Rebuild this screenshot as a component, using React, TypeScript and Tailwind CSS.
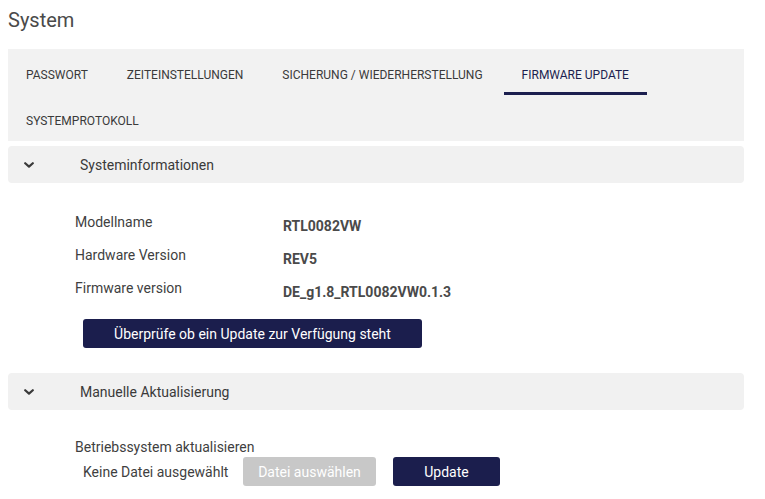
import React from "react";

const tabs = [
  { label: "PASSWORT", active: false },
  { label: "ZEITEINSTELLUNGEN", active: false },
  { label: "SICHERUNG / WIEDERHERSTELLUNG", active: false },
  { label: "FIRMWARE UPDATE", active: true },
  { label: "SYSTEMPROTOKOLL", active: false },
];

function Chevron() {
  return (
    <svg width="10" height="6" viewBox="0 0 10 6" className="block">
      <polyline points="1.2,1.2 5,4.6 8.8,1.2" fill="none" stroke="#3a3a3a" strokeWidth="2.2" strokeLinecap="round" strokeLinejoin="round" />
    </svg>
  );
}

function AccordionHeader({ title }: { title: string }) {
  return (
    <div className="h-[37px] rounded-[4px] bg-[#f1f1f1] flex items-center">
      <div className="ml-[16px] w-[10px]">
        <Chevron />
      </div>
      <div className="ml-[46px] text-[14px] leading-[20px] text-[#3a3a3a]">{title}</div>
    </div>
  );
}

const info = [
  ["Modellname", "RTL0082VW"],
  ["Hardware Version", "REV5"],
  ["Firmware version", "DE_g1.8_RTL0082VW0.1.3"],
];

export default function App() {
  return (
    <div className="min-h-[499px] bg-white" style={{ fontFamily: "Roboto, 'Noto Sans', sans-serif" }}>
      <div className="ml-[8px] w-[736px]">
        <div className="pt-[6px] text-[20px] leading-[28px] text-[#4a4a4a]">System</div>

        <div className="mt-[15px] bg-[#f2f2f2] flex flex-wrap gap-x-[3px]">
          {tabs.map((t) => (
            <div
              key={t.label}
              className={
                "h-[46px] px-[18px] pt-[18px] text-[12px] leading-[16px] whitespace-nowrap " +
                (t.active
                  ? "border-b-[3px] border-[#1c1f4f] text-[#1c1f4f]"
                  : "text-[#3a3a3a]")
              }
            >
              {t.label}
            </div>
          ))}
        </div>

        <div className="mt-[5px]">
          <AccordionHeader title="Systeminformationen" />
          <div className="pl-[67px] pt-[29px]">
            {info.map(([k, v]) => (
              <div key={k} className="h-[33px] flex items-start">
                <div className="w-[208px] text-[14px] leading-[20px] text-[#3f3f3f]">{k}</div>
                <div className="mt-[4px] text-[14px] leading-[20px] font-bold text-[#4a4a4a]">{v}</div>
              </div>
            ))}
            <button className="mt-[8px] ml-[8px] h-[29px] w-[339px] rounded-[3px] bg-[#1b1e4d] text-white text-[14px] leading-[20px] flex items-center justify-center">
              Überprüfe ob ein Update zur Verfügung steht
            </button>
          </div>
        </div>

        <div className="mt-[25px]">
          <AccordionHeader title="Manuelle Aktualisierung" />
          <div className="pl-[67px] pt-[27px]">
            <div className="text-[14px] leading-[20px] text-[#3f3f3f]">Betriebssystem aktualisieren</div>
            <div className="flex items-center h-[29px] pl-[8px]">
              <div className="w-[160px] text-[14px] leading-[20px] text-[#3f3f3f] whitespace-nowrap">Keine Datei ausgewählt</div>
              <button className="h-[29px] w-[133px] rounded-[3px] bg-[#c8c8c8] text-white text-[14px] leading-[20px] flex items-center justify-center">
                Datei auswählen
              </button>
              <button className="ml-[17px] h-[29px] w-[107px] rounded-[3px] bg-[#1b1e4d] text-white text-[14px] leading-[20px] flex items-center justify-center">
                Update
              </button>
            </div>
          </div>
        </div>
      </div>
    </div>
  );
}
